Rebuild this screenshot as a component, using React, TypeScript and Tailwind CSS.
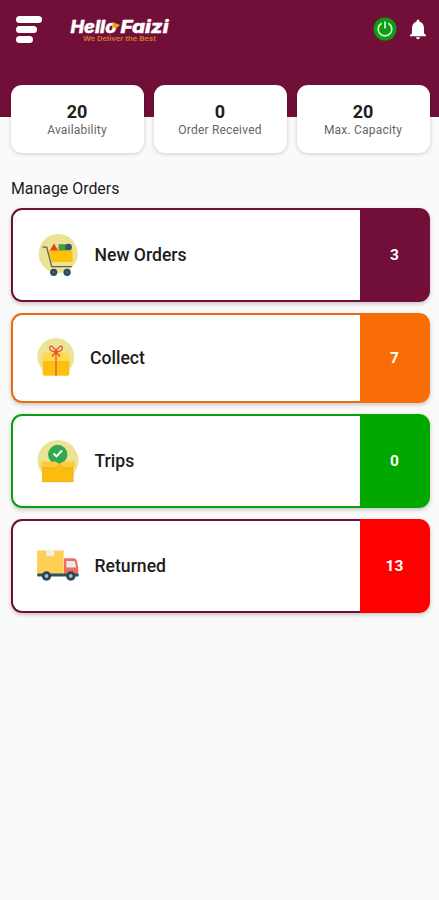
import type { ReactNode } from "react";

const stats = [
  { value: 20, label: "Availability" },
  { value: 0, label: "Order Received" },
  { value: 20, label: "Max. Capacity" },
];

function Logo() {
  return (
    <svg width="106" height="30" viewBox="0 0 106 30" className="overflow-visible font-[Inter,sans-serif]">
      <g fill="#fff" stroke="#fff" strokeWidth="0.4" fontWeight="800" fontStyle="italic">
        <text x="1.500" y="17" fontSize="17" textLength="46" lengthAdjust="spacingAndGlyphs">
          Hello
        </text>
        <text x="51.500" y="17" fontSize="18" textLength="48" lengthAdjust="spacingAndGlyphs">
          Faizi
        </text>
      </g>
      <path d="M43.500 6l7.500 3-4.500 4-3-2.500z" fill="#f5a11c" />
      <text
        x="14"
        y="25"
        fontSize="6"
        fontWeight="700"
        fill="#cf742c"
        textLength="73"
        lengthAdjust="spacingAndGlyphs"
      >
        We Deliver the Best
      </text>
    </svg>
  );
}

function CartIcon() {
  return (
    <svg width="44" height="48" viewBox="0 0 44 48" fill="none">
      <circle cx="22.200" cy="22.600" r="19.500" fill="#eae393" />
      <path d="M13.500 20L18 12.500l4.500 7.500z" fill="#ee3b24" />
      <rect x="22.500" y="13.200" width="8" height="7" fill="#43a047" />
      <circle cx="32.500" cy="16.200" r="3.400" fill="#34566b" />
      <path d="M12.800 19.500h23.700v11.600H15.500z" fill="#ffc107" />
      <path d="M6.500 16.200h4.200l5 19.500h20" stroke="#5d6257" strokeWidth="1.300" />
      <circle cx="17.700" cy="41.300" r="3.600" fill="#2c4a5c" />
      <circle cx="31.100" cy="41.300" r="3.600" fill="#2c4a5c" />
      <circle cx="17.700" cy="41.300" r="1" fill="#5d7887" />
      <circle cx="31.100" cy="41.300" r="1" fill="#5d7887" />
    </svg>
  );
}

function GiftIcon() {
  return (
    <svg width="44" height="48" viewBox="0 0 44 48" fill="none">
      <circle cx="19.800" cy="22.700" r="18.500" fill="#ebe395" />
      <path d="M8 18.500h23.700l2.300 9H5.500z" fill="#ffd94f" />
      <path d="M6.700 27h26.600v12.800a2 2 0 0 1-2 2H8.700a2 2 0 0 1-2-2z" fill="#fdc010" />
      <path d="M20 19v22.500" stroke="#e8632b" strokeWidth="1.500" />
      <path
        d="M20 18c-1.500-5-5.500-7.500-6.300-4.500-.5 2.800 3 4.500 6.300 4.500zM20 18c1.500-5 5.500-7.500 6.300-4.500.5 2.800-3 4.500-6.300 4.500zM20 18l-4 4.500M20 18l4 4.500"
        stroke="#e5532d"
        strokeWidth="1.300"
      />
    </svg>
  );
}

function BoxIcon() {
  return (
    <svg width="44" height="48" viewBox="0 0 44 48" fill="none">
      <circle cx="22" cy="23.500" r="20.500" fill="#ebe395" />
      <path d="M3 37.500h38v9H3z" fill="#fff" />
      <circle cx="21.700" cy="17.500" r="9.700" fill="#2fa84f" />
      <path d="M17.500 16.500l3 3 5.500-6" stroke="#fff" strokeWidth="1.900" />
      <path d="M6.300 29h31v16h-31z" fill="#fcbc0e" />
      <path d="M6 24.500h13.500l4.200 2.500 3.300-2.500h11.200l1.300 5.500-12.500 1.500-3.300-3.500-4 3.500-15.500-1z" fill="#ffc93a" />
      <path d="M6.300 31h13l4.400-3.500 3.300 3.500h10" stroke="#e3a41c" strokeWidth="0.900" />
      <path d="M6.800 30.500v14.200h30V30.500" stroke="#e9b02a" strokeWidth="0.900" />
    </svg>
  );
}

function TruckIcon() {
  return (
    <svg width="44" height="48" viewBox="0 0 44 48" fill="none">
      <rect x="1.200" y="8.500" width="26.500" height="24" rx="0.800" fill="#fdcf55" />
      <path d="M10.300 8.500h8v6.200l-2-.9-2 .9-2-.9-2 .9z" fill="#f2efe6" />
      <path d="M28 16.300h9.500c2 0 3 1.200 3.500 3.200l1.200 6v7H28z" fill="#f26c5a" />
      <path d="M30.300 19h7.200c1 0 1.500.6 1.800 1.800l.9 4.700h-9.900z" fill="#e3ebef" />
      <rect x="1.200" y="31.500" width="41.500" height="3" rx="1" fill="#33505f" />
      <circle cx="10.500" cy="34" r="4.700" fill="#294654" />
      <circle cx="34.800" cy="34" r="4.700" fill="#294654" />
      <circle cx="10.500" cy="34" r="1.900" fill="#a9bac2" />
      <circle cx="34.800" cy="34" r="1.900" fill="#a9bac2" />
    </svg>
  );
}

type OrderRowProps = {
  icon: ReactNode;
  label: string;
  count: number;
  height: string;
  border: string;
  badge: string;
  labelClass?: string;
};

function OrderRow({ icon, label, count, height, border, badge, labelClass = "ml-[14.5px]" }: OrderRowProps) {
  return (
    <div className={`flex rounded-[11px] shadow-[0_2px_4px_rgba(0,0,0,0.2)] ${height}`}>
      <div className={`flex flex-1 items-center rounded-l-[11px] border-2 border-r-0 bg-white pl-[23px] ${border}`}>
        {icon}
        <span className={`text-[17.6px] font-medium text-[#1c1c1c] ${labelClass}`}>{label}</span>
      </div>
      <div
        className={`flex w-[70px] items-center justify-center rounded-r-[11px] pr-px pt-0.5 text-[15.5px] font-bold text-white ${badge}`}
      >
        {count}
      </div>
    </div>
  );
}

export default function App() {
  return (
    <div className="h-[900px] w-full overflow-hidden bg-[#fafafa] font-[Roboto,sans-serif]">
      {/* Header */}
      <header className="flex h-[117px] items-start bg-[#720f39] pl-4 pr-[10px] pt-4">
        <div className="flex flex-col gap-[3px]">
          <span className="h-[7px] w-[26px] rounded-full bg-white" />
          <span className="h-[7px] w-[21px] rounded-full bg-white" />
          <span className="h-[7px] w-[17px] rounded-full bg-white" />
        </div>
        <div className="ml-[27px]">
          <Logo />
        </div>
        <div className="ml-auto flex items-center gap-[10px]">
          <svg width="24" height="26" viewBox="0 0 24 26" fill="none">
            <circle cx="12" cy="13" r="11.500" fill="#0c9d12" />
            <path d="M8.700 7.200a6.800 6.800 0 1 0 6.600 0M12 5.500v7" stroke="#d5f5d5" strokeWidth="1.700" />
          </svg>
          <svg width="22" height="26" viewBox="0 0 22 26" fill="#fff">
            <path d="M11 23.200c1.100 0 2-.8 2-1.900H9c0 1.100.9 1.900 2 1.900zM17 17.300v-5.100c0-3.200-1.600-5.700-4.500-6.400v-.7a1.500 1.500 0 0 0-3 0v.7C6.600 6.500 5 9 5 12.200v5.100l-2 1.900v1h16v-1z" />
          </svg>
        </div>
      </header>

      {/* Stats */}
      <section className="relative -mt-8 flex gap-[10px] pl-[11px] pr-[9px]">
        {stats.map((stat) => (
          <div
            key={stat.label}
            className="flex h-[68px] flex-1 flex-col items-center rounded-[11px] bg-white pr-px pt-4 shadow-[0_1px_4px_rgba(0,0,0,0.18)]"
          >
            <span className="text-[18px] font-bold leading-[22px] text-[#212121]">{stat.value}</span>
            <span className="text-[12px] leading-[14px] tracking-[0.2px] text-[#666]">{stat.label}</span>
          </div>
        ))}
      </section>

      {/* Orders */}
      <section className="pl-[11px] pr-[9px] pt-[26px]">
        <h2 className="text-[15.9px] leading-5 text-[#1c1c1c]">Manage Orders</h2>
        <div className="mt-[9px] flex flex-col gap-[11px]">
          <OrderRow
            icon={<CartIcon />}
            label="New Orders"
            count={3}
            height="h-[94px]"
            border="border-[#720f39]"
            badge="bg-[#720f39]"
          />
          <OrderRow
            icon={<GiftIcon />}
            label="Collect"
            count={7}
            height="h-[90px]"
            border="border-[#e96a10]"
            badge="bg-[#f96d06]"
            labelClass="ml-[10px]"
          />
          <OrderRow
            icon={<BoxIcon />}
            label="Trips"
            count={0}
            height="h-[94px]"
            border="border-[#0b9d12]"
            badge="bg-[#00a800]"
          />
          <OrderRow
            icon={<TruckIcon />}
            label="Returned"
            count={13}
            height="h-[94px]"
            border="border-[#720f39]"
            badge="bg-[#ff0000]"
          />
        </div>
      </section>
    </div>
  );
}
